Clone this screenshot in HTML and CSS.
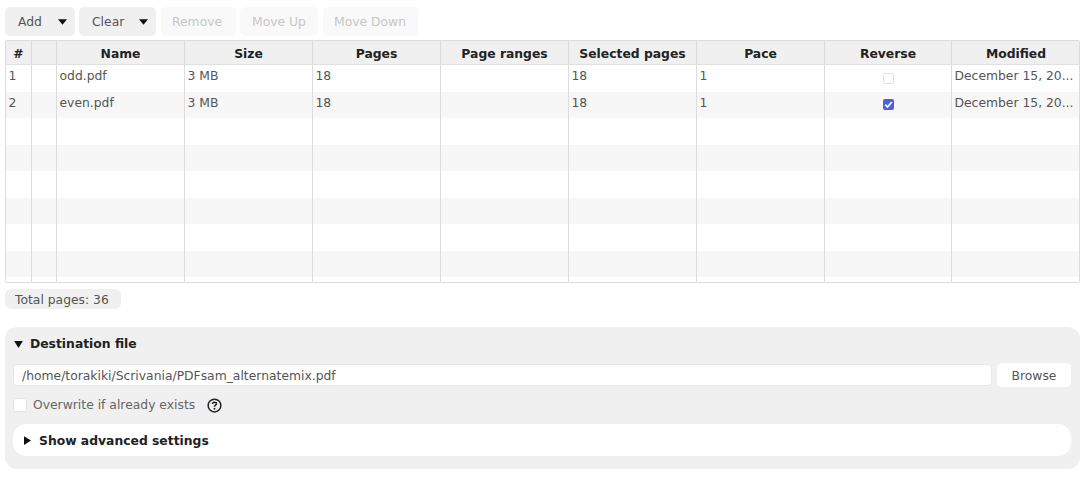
FILE: index.html
```html
<!DOCTYPE html>
<html lang="en">
<head>
<meta charset="utf-8">
<title>PDFsam Alternate Mix</title>
<link rel="stylesheet" href="styles.css">
</head>
<body>
<div class="toolbar">
  <button class="btn btn-add">Add<svg class="caret" viewBox="0 0 10 6"><path d="M0 0H10L5 6Z"/></svg></button>
  <button class="btn btn-clear">Clear<svg class="caret" viewBox="0 0 10 6"><path d="M0 0H10L5 6Z"/></svg></button>
  <button class="btn off btn-remove">Remove</button>
  <button class="btn off btn-up">Move Up</button>
  <button class="btn off btn-down">Move Down</button>
</div>
<div class="table-wrap">
  <table>
    <colgroup>
      <col class="c-num"><col class="c-blank"><col class="c"><col class="c"><col class="c"><col class="c"><col class="c"><col class="c"><col class="c-rev"><col class="c">
    </colgroup>
    <thead>
      <tr><th>#</th><th></th><th>Name</th><th>Size</th><th>Pages</th><th>Page ranges</th><th>Selected pages</th><th>Pace</th><th>Reverse</th><th>Modified</th></tr>
    </thead>
    <tbody>
      <tr><td>1</td><td></td><td>odd.pdf</td><td>3 MB</td><td>18</td><td></td><td>18</td><td>1</td><td class="mid"><span class="chk chk-off"></span></td><td>December 15, 20...</td></tr>
      <tr><td>2</td><td></td><td>even.pdf</td><td>3 MB</td><td>18</td><td></td><td>18</td><td>1</td><td class="mid"><span class="chk chk-on"><svg viewBox="0 0 11 11"><path d="M2.2 5.6L4.5 8L8.8 3" fill="none" stroke="#fff" stroke-width="1.8"/></svg></span></td><td>December 15, 20...</td></tr>
      <tr><td></td><td></td><td></td><td></td><td></td><td></td><td></td><td></td><td></td><td></td></tr>
      <tr><td></td><td></td><td></td><td></td><td></td><td></td><td></td><td></td><td></td><td></td></tr>
      <tr><td></td><td></td><td></td><td></td><td></td><td></td><td></td><td></td><td></td><td></td></tr>
      <tr><td></td><td></td><td></td><td></td><td></td><td></td><td></td><td></td><td></td><td></td></tr>
      <tr><td></td><td></td><td></td><td></td><td></td><td></td><td></td><td></td><td></td><td></td></tr>
      <tr><td></td><td></td><td></td><td></td><td></td><td></td><td></td><td></td><td></td><td></td></tr>
      <tr><td></td><td></td><td></td><td></td><td></td><td></td><td></td><td></td><td></td><td></td></tr>
    </tbody>
  </table>
</div>
<div class="total">Total pages: 36</div>
<section class="panel">
  <div class="panel-title"><svg class="tri-down" viewBox="0 0 10 8"><path d="M0 0H10L5 8Z"/></svg>Destination file</div>
  <div class="file-row">
    <div class="field">/home/torakiki/Scrivania/PDFsam_alternatemix.pdf</div>
    <button class="browse">Browse</button>
  </div>
  <div class="over-row">
    <span class="box"></span><span class="over-label">Overwrite if already exists</span>
    <svg class="help" viewBox="0 0 16 16"><circle cx="8" cy="8" r="6.8" fill="none" stroke="#222" stroke-width="1.6"/><path d="M5.9 6.3C5.9 5 6.9 4.4 8 4.4C9.2 4.4 10.1 5.1 10.1 6.2C10.1 7.6 8 7.6 8 9.2" fill="none" stroke="#222" stroke-width="1.6"/><circle cx="8" cy="11.4" r="1" fill="#222"/></svg>
  </div>
  <div class="advanced"><svg class="tri-right" viewBox="0 0 8 10"><path d="M0 0V10L8 5Z"/></svg><span class="adv-label">Show advanced settings</span></div>
</section>
</body>
</html>
```
FILE: styles.css
```css
* { box-sizing: border-box; }
html, body { height: 100%; }
body {
  margin: 0;
  padding: 7px 10px 0 5px;
  background: #fff;
  color: #555;
  font-family: "DejaVu Sans", sans-serif;
  font-size: 12.35px;
  overflow: hidden;
}
.toolbar { display: flex; height: 29px; }
.btn {
  display: flex;
  align-items: center;
  height: 29px;
  padding: 0 0 0 13px;
  border: 0;
  border-radius: 5px;
  background: #f0f0f0;
  color: #555;
  font: 12.35px "DejaVu Sans", sans-serif;
}
.caret { width: 9px; height: 6px; fill: #111; margin-left: 16px; }
.btn-add { width: 70px; margin-right: 4px; }
.btn-clear { width: 77px; margin-right: 5px; }
.btn-clear .caret { margin-left: 15px; }
.off { background: #f9f9f9; color: #c6c6c6; }
.btn-remove { width: 75px; padding-left: 11px; margin-right: 4px; }
.btn-up { width: 78px; padding-left: 12px; margin-right: 5px; }
.btn-down { width: 95px; padding-left: 11px; }
.table-wrap {
  width: 1075px;
  height: 243px;
  margin-top: 4px;
  border: 1px solid #dcdcdc;
  border-radius: 2px;
  overflow: hidden;
}
table { width: 1073px; border-collapse: separate; border-spacing: 0; table-layout: fixed; }
.c-num { width: 26px; }
.c-blank { width: 25px; }
.c { width: 128px; }
.c-rev { width: 127px; }
th {
  height: 24px;
  padding: 2px 0 0;
  background: #f0f0f0;
  border-right: 1px solid #dcdcdc;
  border-bottom: 1px solid #e0e0e0;
  color: #222;
  font-size: 12.35px;
  font-weight: 700;
  text-align: center;
}
td {
  height: 26.5px;
  padding: 0 3px 4.5px 2.5px;
  border-right: 1px solid #dcdcdc;
  color: #555;
  white-space: nowrap;
  overflow: hidden;
}
th:last-child, td:last-child { border-right: 0; }
tbody tr:nth-child(even) td { background: #f7f7f7; }
td.mid { text-align: center; padding: 0; vertical-align: middle; }
.chk {
  display: block;
  width: 11px;
  height: 11px;
  margin: 0 auto;
  border-radius: 2px;
}
.chk svg { display: block; width: 11px; height: 11px; }
.chk-off { background: #fff; border: 1px solid #e2e2e2; }
.chk-on { background: #4c5fe0; }
.total {
  width: 116px;
  height: 20px;
  margin-top: 6px;
  padding: 1px 0 0 10px;
  border-radius: 6px;
  background: #f0f0f0;
  color: #555;
  line-height: 20px;
}
.panel {
  width: 1075px;
  height: 142px;
  margin-top: 18px;
  padding: 8px 9px 0 8px;
  border-radius: 12px;
  background: #f0f0f0;
}
.panel-title {
  display: flex;
  align-items: center;
  height: 18px;
  color: #222;
  font-weight: 700;
}
.tri-down { width: 9px; height: 7px; fill: #111; margin: 0 7px 0 1px; }
.file-row { display: flex; align-items: center; gap: 5px; margin-top: 10px; height: 24px; }
.field {
  width: 979px;
  height: 22px;
  padding: 1px 0 0 8px;
  border: 1px solid #e8e8e8;
  border-radius: 4px;
  background: #fff;
  color: #555;
  line-height: 20px;
}
.browse {
  width: 74px;
  height: 24px;
  padding: 1px 0 0;
  border: 0;
  border-radius: 5px;
  background: #fff;
  color: #555;
  font: 12.35px "DejaVu Sans", sans-serif;
}
.over-row { display: flex; align-items: center; height: 16px; margin-top: 10px; }
.box {
  width: 14px;
  height: 14px;
  border: 1px solid #e4e4e4;
  border-radius: 2px;
  background: #fff;
}
.over-label { margin-left: 6px; color: #666; }
.help { width: 15px; height: 15px; margin-left: 12px; }
.advanced {
  display: flex;
  align-items: center;
  height: 32px;
  margin-top: 11px;
  padding-left: 11px;
  border-radius: 13px;
  background: #fff;
  color: #222;
  font-weight: 700;
}
.adv-label { padding-top: 1px; }
.tri-right { width: 7px; height: 9px; fill: #111; margin-right: 8px; }
```
